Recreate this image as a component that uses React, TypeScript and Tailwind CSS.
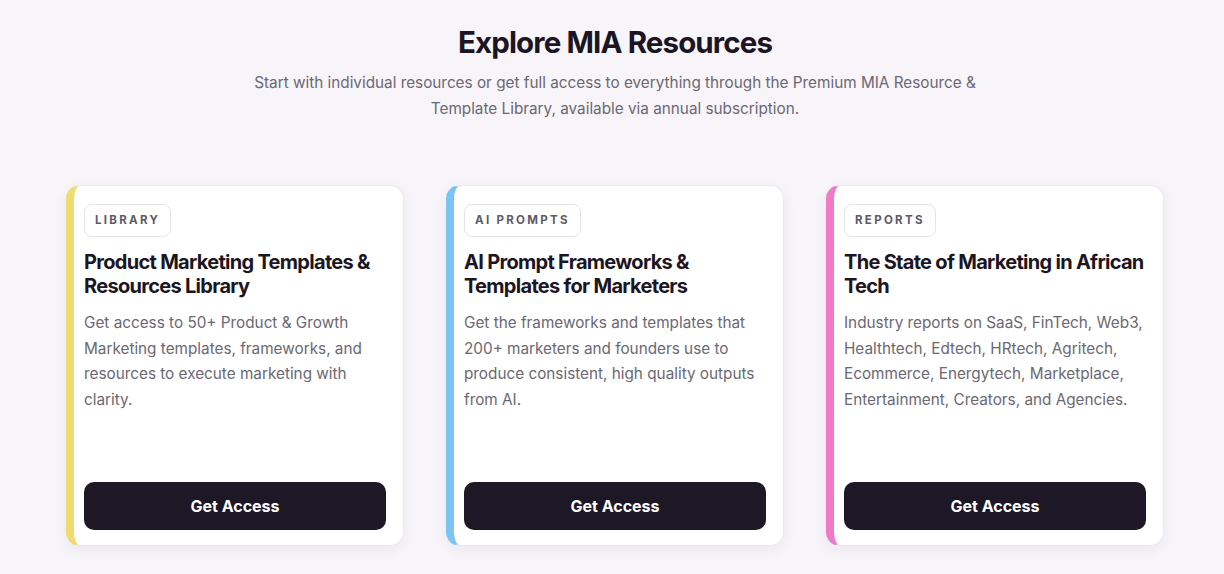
import React from "react";

type Resource = {
  tag: string;
  title: string;
  body: string;
  accent: string;
};

const resources: Resource[] = [
  {
    tag: "LIBRARY",
    title: "Product Marketing Templates & Resources Library",
    body: "Get access to 50+ Product & Growth Marketing templates, frameworks, and resources to execute marketing with clarity.",
    accent: "border-l-[#f0dc6e]",
  },
  {
    tag: "AI PROMPTS",
    title: "AI Prompt Frameworks & Templates for Marketers",
    body: "Get the frameworks and templates that 200+ marketers and founders use to produce consistent, high quality outputs from AI.",
    accent: "border-l-[#7cc4f2]",
  },
  {
    tag: "REPORTS",
    title: "The State of Marketing in African Tech",
    body: "Industry reports on SaaS, FinTech, Web3, Healthtech, Edtech, HRtech, Agritech, Ecommerce, Energytech, Marketplace, Entertainment, Creators, and Agencies.",
    accent: "border-l-[#f07ac8]",
  },
];

function ResourceCard({ r }: { r: Resource }) {
  return (
    <div
      className={`flex h-[361px] flex-col rounded-[14px] border border-[#ebe8ef] border-l-8 ${r.accent} bg-white pb-[15px] pl-[10px] pr-[17px] pt-[18px] shadow-[0_4px_14px_rgba(30,20,50,0.06)]`}
    >
      <div className="self-start rounded-lg border border-[#e6e3ea] px-[10px] py-[8px] text-[11.5px] font-bold leading-[15px] tracking-[0.2em] text-[#5e5a68]">
        {r.tag}
      </div>
      <h3 className="mt-[13px] text-[20px] font-bold leading-6 tracking-[-0.035em] text-[#1c1524]">
        {r.title}
      </h3>
      <p className="mt-3 text-[15.3px] leading-[25.5px] text-[#6b6873]">{r.body}</p>
      <button className="mt-auto h-12 w-full rounded-[10px] bg-[#1e1726] text-[16px] font-bold text-white">
        Get Access
      </button>
    </div>
  );
}

export default function App() {
  return (
    <div
      className="min-h-[574px] bg-[#f7f5fa] pl-[22px] pr-4 pt-6"
      style={{ fontFamily: "Inter, 'Noto Sans', sans-serif" }}
    >
      <div className="text-center">
        <h1 className="text-[29.5px] font-bold leading-9 tracking-[-0.03em] text-[#1c1524]">
          Explore MIA Resources
        </h1>
        <p className="mx-auto mt-[10px] max-w-[740px] text-[15.3px] leading-[26px] text-[#6b6873]">
          Start with individual resources or get full access to everything through the Premium MIA
          Resource &amp; Template Library, available via annual subscription.
        </p>
      </div>

      <div className="mx-auto mt-[63px] grid max-w-[1098px] grid-cols-3 gap-[42px]">
        {resources.map((r) => (
          <ResourceCard key={r.tag} r={r} />
        ))}
      </div>
    </div>
  );
}
